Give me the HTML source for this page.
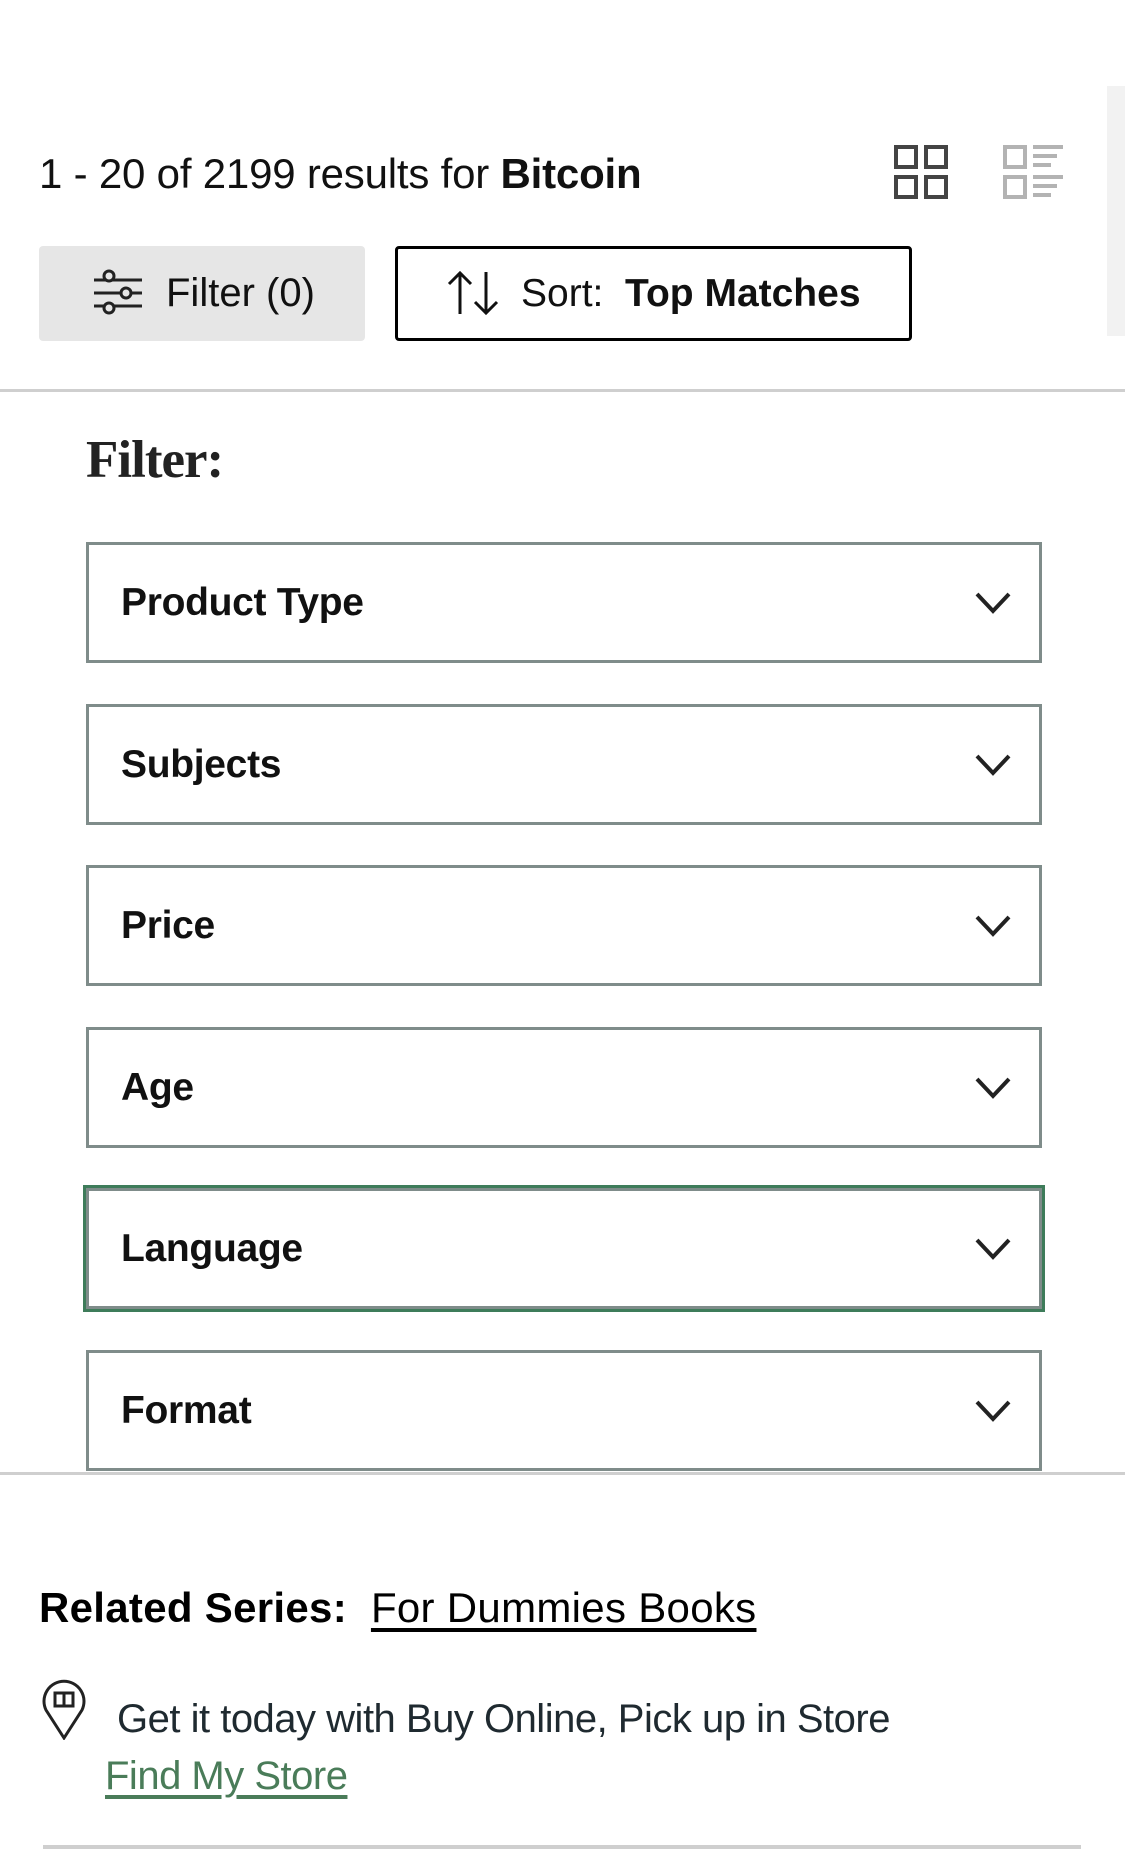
<!DOCTYPE html>
<html><head><meta charset="utf-8"><style>
*{box-sizing:border-box;margin:0;padding:0}
body{width:1125px;height:1849px;background:#fff;position:relative;overflow:hidden;font-family:"Liberation Sans",sans-serif;color:#000}
.a{position:absolute}
.box{position:absolute;left:86px;width:956px;height:121px;border:3px solid #7f8c8a;}
.box span{position:absolute;left:32px;top:0;line-height:115px;font-size:39px;font-weight:bold;color:#111;letter-spacing:-0.3px}
.box svg{position:absolute;left:885px;top:46px}
</style></head><body>
<div class="a" style="left:1107px;top:86px;width:18px;height:250px;background:#f2f2f2"></div>
<div class="a" style="left:39px;top:150px;font-size:42px;letter-spacing:-0.2px;color:#111">1 - 20 of 2199 results for <b>Bitcoin</b></div>
<svg class="a" style="left:894px;top:145px" width="56" height="56"><g fill="none" stroke="#444" stroke-width="4"><rect x="2" y="2" width="20" height="20"/><rect x="32" y="2" width="20" height="20"/><rect x="2" y="32" width="20" height="20"/><rect x="32" y="32" width="20" height="20"/></g></svg>
<svg class="a" style="left:1003px;top:145px" width="62" height="56"><g fill="none" stroke="#b3b3b3" stroke-width="4"><rect x="2" y="2" width="20" height="20"/><rect x="2" y="32" width="20" height="20"/><path d="M30 2h30M30 11h24M30 20h18M30 32h30M30 41h24M30 50h18"/></g></svg>
<div class="a" style="left:39px;top:246px;width:326px;height:95px;background:#e6e6e6;border-radius:4px"></div>
<svg class="a" style="left:92px;top:268px" width="50" height="50"><g fill="none" stroke="#222" stroke-width="3"><path d="M2 12h48M2 25h48M2 38h48"/><circle cx="17" cy="8" r="5" fill="#e6e6e6"/><circle cx="34" cy="25" r="5" fill="#e6e6e6"/><circle cx="17" cy="40" r="5" fill="#e6e6e6"/></g></svg>
<div class="a" style="left:166px;top:271px;font-size:40px;color:#111">Filter (0)</div>
<div class="a" style="left:395px;top:246px;width:517px;height:95px;border:3px solid #000;border-radius:4px"></div>
<svg class="a" style="left:446px;top:270px" width="56" height="46"><g fill="none" stroke="#111" stroke-width="3"><path d="M14 44V3M3 14L14 3L25 14M40 2V43M29 32L40 43L51 32"/></g></svg>
<div class="a" style="left:521px;top:272px;font-size:39px;color:#111">Sort:&nbsp; <b>Top Matches</b></div>
<div class="a" style="left:0;top:389px;width:1125px;height:3px;background:#cfcfcf"></div>
<div class="a" style="left:86px;top:430px;font-family:'Liberation Serif',serif;font-size:53px;font-weight:bold;color:#222;letter-spacing:-1px">Filter:</div>
<div class="box" style="top:542px"><span>Product Type</span><svg width="38" height="26"><path d="M3 3L19 20L35 3" fill="none" stroke="#222" stroke-width="4"/></svg></div>
<div class="box" style="top:704px"><span>Subjects</span><svg width="38" height="26"><path d="M3 3L19 20L35 3" fill="none" stroke="#222" stroke-width="4"/></svg></div>
<div class="box" style="top:865px"><span>Price</span><svg width="38" height="26"><path d="M3 3L19 20L35 3" fill="none" stroke="#222" stroke-width="4"/></svg></div>
<div class="box" style="top:1027px"><span>Age</span><svg width="38" height="26"><path d="M3 3L19 20L35 3" fill="none" stroke="#222" stroke-width="4"/></svg></div>
<div class="box" style="top:1188px;outline:3px solid #3e7c5a"><span>Language</span><svg width="38" height="26"><path d="M3 3L19 20L35 3" fill="none" stroke="#222" stroke-width="4"/></svg></div>
<div class="box" style="top:1350px"><span>Format</span><svg width="38" height="26"><path d="M3 3L19 20L35 3" fill="none" stroke="#222" stroke-width="4"/></svg></div>
<div class="a" style="left:0;top:1472px;width:1125px;height:3px;background:#cfcfcf"></div>
<div class="a" style="left:39px;top:1584px;font-size:42px;color:#000;letter-spacing:0.3px"><b>Related Series:</b>&nbsp; <span style="text-decoration:underline;text-underline-offset:6px">For Dummies Books</span></div>
<svg class="a" style="left:41px;top:1678px" width="46" height="62"><g fill="none" stroke="#222" stroke-width="3"><path d="M23 60L5 32A20 20 0 1 1 41 32Z"/><path d="M14 15h18v13H14zM23 15v13"/></g></svg>
<div class="a" style="left:117px;top:1697px;font-size:40px;color:#1f2a30;letter-spacing:-0.5px">Get it today with Buy Online, Pick up in Store</div>
<div class="a" style="left:105px;top:1754px;font-size:40px;color:#4a7c59;text-decoration:underline;text-underline-offset:6px;letter-spacing:-0.5px">Find My Store</div>
<div class="a" style="left:43px;top:1845px;width:1038px;height:4px;background:#cfcfcf"></div>
</body></html>
